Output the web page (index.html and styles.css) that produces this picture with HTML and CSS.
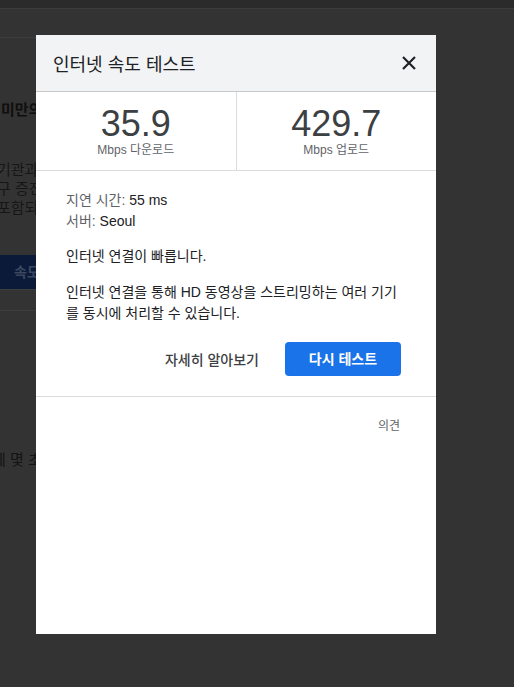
FILE: index.html
```html
<!DOCTYPE html>
<html lang="ko">
<head>
<meta charset="utf-8">
<title>인터넷 속도 테스트</title>
<link rel="stylesheet" href="styles.css">
</head>
<body>
<div class="page">
  <div class="topbar"></div>
  <div class="leftcol">
    <div class="lc-gap1"></div>
    <div class="lc-title">미만의</div>
    <div class="lc-rule"></div>
    <div class="lc-text">기관과<br>구 증진<br>포함되</div>
    <div class="lc-btn">속도</div>
    <div class="lc-rule2"></div>
    <div class="lc-rule3"></div>
    <div class="lc-text2">에 몇 초</div>
  </div>
</div>

<div class="modal">
  <div class="m-header">
    <div class="m-title">인터넷 속도 테스트</div>
    <svg class="m-close" width="16" height="16" viewBox="0 0 16 16"><path d="M2 2 L14 14 M14 2 L2 14" stroke="#202124" stroke-width="2.2" fill="none"/></svg>
  </div>
  <div class="m-speeds">
    <div class="speed speed-left">
      <div class="speed-num">35.9</div>
      <div class="speed-label">Mbps 다운로드</div>
    </div>
    <div class="speed">
      <div class="speed-num">429.7</div>
      <div class="speed-label">Mbps 업로드</div>
    </div>
  </div>
  <div class="m-body">
    <div class="info"><span class="info-k">지연 시간:</span> 55 ms</div>
    <div class="info"><span class="info-k">서버:</span> Seoul</div>
    <p class="msg">인터넷 연결이 빠릅니다.</p>
    <p class="msg msg2">인터넷 연결을 통해 HD 동영상을 스트리밍하는 여러 기기를 동시에 처리할 수 있습니다.</p>
    <div class="actions">
      <span class="link-btn">자세히 알아보기</span>
      <span class="primary-btn">다시 테스트</span>
    </div>
  </div>
  <div class="m-footer">
    <span class="feedback">의견</span>
  </div>
</div>
</body>
</html>
```
FILE: styles.css
```css
html, body {
  margin: 0;
  padding: 0;
}
body {
  background: #333333;
  width: 514px;
  height: 687px;
  overflow: hidden;
  font-family: "Liberation Sans", Arial, "Noto Sans CJK KR", sans-serif;
}
.page {
  width: 514px;
}
.topbar {
  height: 8px;
  background: #2b2b2b;
  border-bottom: 1px solid #3c3c3c;
}
.leftcol {
  width: 36px;
  overflow: hidden;
  white-space: nowrap;
  color: #141414;
}
.lc-gap1 {
  height: 28px;
  border-bottom: 1px solid #3d3d3d;
}
.lc-title {
  margin-top: 62px;
  font-size: 15px;
  font-weight: bold;
  line-height: 20px;
  margin-left: 1px;
  color: #0f0f0f;
}
.lc-rule {
  margin-top: 49px;
  height: 1px;
  background: #3d3d3d;
}
.lc-text {
  margin-top: -10px;
  margin-left: -3px;
  font-size: 15px;
  line-height: 19px;
  color: #161616;
}
.lc-btn {
  margin-top: 38px;
  height: 34px;
  line-height: 34px;
  background: #0b1a38;
  color: #3b4760;
  font-size: 14px;
  font-weight: bold;
  padding-left: 14px;
}
.lc-rule2 {
  height: 1px;
  background: #3d3d3d;
}
.lc-rule3 {
  margin-top: 20px;
  height: 1px;
  background: #3d3d3d;
}
.lc-text2 {
  margin-top: 139px;
  margin-left: -8px;
  font-size: 15px;
  line-height: 20px;
  color: #141414;
}

.modal {
  position: absolute;
  left: 36px;
  top: 35px;
  width: 400px;
  height: 599px;
  background: #ffffff;
  display: flex;
  flex-direction: column;
  font-family: "Liberation Sans", Arial, "Noto Sans CJK KR", sans-serif;
}
.m-header {
  height: 56px;
  background: #f1f3f4;
  border-bottom: 1px solid #c8c8c8;
  display: flex;
  align-items: center;
  justify-content: space-between;
  padding: 0 19px 0 17px;
}
.m-title {
  font-family: "Noto Sans CJK KR", sans-serif;
  font-size: 18px;
  color: #202124;
  margin-top: -1px;
}
.m-close {
  display: block;
  margin-top: -1px;
}
.m-speeds {
  display: flex;
  height: 78px;
  border-bottom: 1px solid #dadce0;
}
.speed {
  flex: 1;
  display: flex;
  flex-direction: column;
  align-items: center;
  padding-top: 13px;
}
.speed-left {
  border-right: 1px solid #dadce0;
}
.speed-num {
  font-family: "Liberation Sans", Arial, sans-serif;
  font-size: 36px;
  line-height: 38px;
  color: #3c4043;
}
.speed-label {
  font-family: "Liberation Sans", Arial, "Noto Sans CJK KR", sans-serif;
  font-size: 12px;
  line-height: 15px;
  color: #5f6368;
}
.m-body {
  padding: 19px 35px 20px 30px;
  border-bottom: 1px solid #dadce0;
}
.info {
  font-size: 14px;
  line-height: 21px;
  color: #202124;
}
.info-k {
  color: #5f6368;
}
.msg {
  margin: 14px 0 0 0;
  font-size: 14px;
  line-height: 21px;
  color: #202124;
}
.msg2 {
  margin-top: 15px;
}
.actions {
  margin-top: 18px;
  display: flex;
  justify-content: flex-end;
  align-items: center;
  gap: 26px;
}
.link-btn {
  font-size: 14px;
  color: #3c4043;
  font-weight: 500;
}
.primary-btn {
  width: 116px;
  height: 34px;
  line-height: 34px;
  text-align: center;
  background: #1a73e8;
  color: #ffffff;
  font-weight: bold;
  font-size: 14px;
  border-radius: 4px;
}
.m-footer {
  display: flex;
  justify-content: flex-end;
  padding: 19px 36px 0 0;
}
.feedback {
  font-size: 12px;
  color: #5f6368;
}
```
